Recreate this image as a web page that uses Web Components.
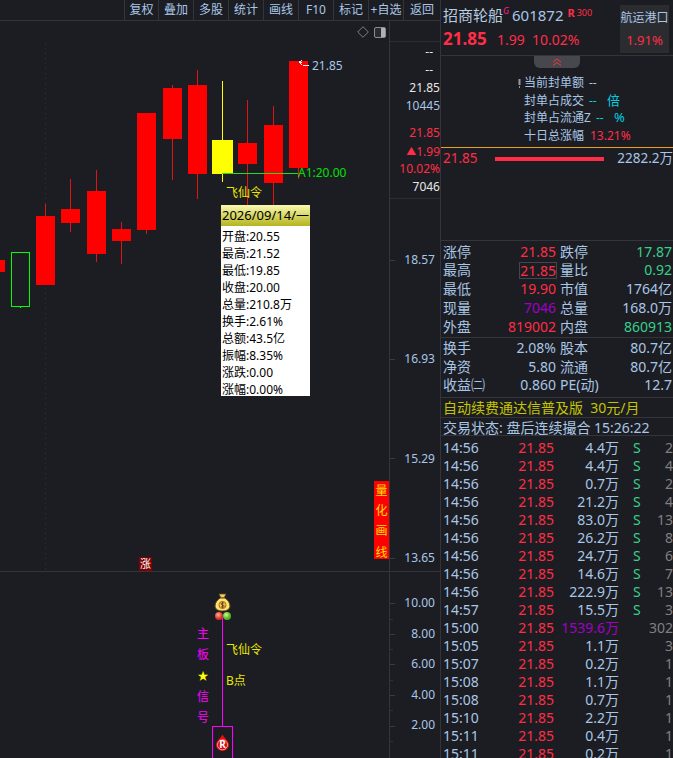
<!DOCTYPE html>
<html lang="zh"><head><meta charset="utf-8"><title>招商轮船</title>
<style>
html,body{margin:0;padding:0;background:#1c1d22;height:758px;overflow:hidden}
body{font:14px/1 "Noto Sans","Noto Sans CJK SC",sans-serif;color:#a9c6e6}
</style></head><body>
<x-app>
  <x-left slot="left">
    <x-toolbar>
      <x-tool style="width:34px">复权</x-tool><x-tool>叠加</x-tool><x-tool>多股</x-tool><x-tool>统计</x-tool><x-tool>画线</x-tool><x-tool>F10</x-tool><x-tool>标记</x-tool><x-tool>+自选</x-tool><x-tool style="width:37px">返回</x-tool>
    </x-toolbar>
    <x-kline-pane></x-kline-pane>
    <x-signal-pane></x-signal-pane>
  </x-left>
  <x-right slot="right">
    <x-quote-head></x-quote-head>
    <x-seal-panel></x-seal-panel>
    <x-stat-block style="--row:18.75px;--pt:1.5px;--pb:1px">
      <x-stat-row a="涨停" b="21.85" bc="r" c="跌停" d="17.87" dc="g"></x-stat-row>
      <x-stat-row a="最高" b="21.85" bc="r" boxed c="量比" d="0.92" dc="g"></x-stat-row>
      <x-stat-row a="最低" b="19.90" bc="r" c="市值" d="1764亿"></x-stat-row>
      <x-stat-row a="现量" b="7046" bc="p" c="总量" d="168.0万"></x-stat-row>
      <x-stat-row a="外盘" b="819002" bc="r" c="内盘" d="860913" dc="g"></x-stat-row>
    </x-stat-block>
    <x-stat-block style="--row:18.5px;--pt:1px;--pb:2px">
      <x-stat-row a="换手" b="2.08%" c="股本" d="80.7亿"></x-stat-row>
      <x-stat-row a="净资" b="5.80" c="流通" d="80.7亿"></x-stat-row>
      <x-stat-row a="收益㈡" b="0.860" c="PE(动)" d="12.7"></x-stat-row>
    </x-stat-block>
    <x-notice-row style="color:#c4c400;height:20px">自动续费通达信普及版&nbsp;&nbsp;30元/月</x-notice-row>
    <x-notice-row style="height:18px">交易状态: 盘后连续撮合 15:26:22</x-notice-row>
    <x-trade-list></x-trade-list>
  </x-right>
</x-app>
<script>
const BG='#1c1d22', RED='#ff2d46', LINE='#34353a';
function def(name, css, html){
  customElements.define(name, class extends HTMLElement{
    constructor(){super();this.attachShadow({mode:'open'}).innerHTML='<style>'+css+'</style>'+(typeof html==='function'?html(this):html);}
  });
}
def('x-app',':host{display:grid;grid-template-columns:440px 233px;width:673px;height:758px;overflow:hidden;background:'+BG+'}',
 '<slot name="left"></slot><slot name="right"></slot>');
def('x-left',':host{display:flex;flex-direction:column;height:758px;overflow:hidden;min-width:0}','<slot></slot>');
def('x-right',':host{display:flex;flex-direction:column;height:758px;overflow:hidden;border-left:1px solid '+LINE+';box-sizing:border-box;width:233px}','<slot></slot>');
def('x-toolbar',':host{display:flex;justify-content:flex-end;height:21px;box-sizing:border-box;border-bottom:1px solid '+LINE+';overflow:hidden;flex:none}','<slot></slot>');
def('x-tool',':host{display:flex;align-items:center;justify-content:center;width:35px;height:20px;box-sizing:border-box;border-left:1px solid '+LINE+';font-size:12px;white-space:nowrap;color:#a9c6e6}','<slot></slot>');

/* K-line */
const candles=[
 [0,5,260,272,null,null,2],
 [36,55,216,285,204,285,45],
 [61,80,209,223,179,232,70],
 [87,106,191,254,170,262,96],
 [112,131,229,241,222,264,121],
 [137,156,113,230,113,234,146],
 [163,182,88,139,85,180,172],
 [188,207,85,174,70,199,197],
 [238,257,143,164,100,205,247],
 [264,283,125,183,106,205,273],
 [289,308,61,168,61,179,298]];
function candleSvg(){
 let s='';
 for(let y=43;y<570;y+=5) s+=`<rect x="45" y="${y-21}" width="1" height="1" fill="#33343a"/>`;
 for(const c of candles){
  if(c[4]!==null) s+=`<rect x="${c[6]}" y="${c[4]-21}" width="1" height="${c[5]-c[4]}" fill="#e01414"/>`;
  s+=`<rect x="${c[0]}" y="${c[2]-21}" width="${c[1]-c[0]}" height="${c[3]-c[2]}" fill="#ff0000"/>`;
 }
 s+=`<rect x="222" y="60" width="1" height="101" fill="#ffff00"/><rect x="212" y="119" width="21" height="34" fill="#ffff00"/>`;
 s+=`<rect x="11.5" y="231.5" width="18" height="54" fill="none" stroke="#00ff00"/><rect x="20" y="286" width="1" height="1" fill="#00ff00"/>`;
 s+=`<rect x="222" y="152" width="76" height="1" fill="#22dd22"/>`;
 s+=`<path d="M299 41.500h3M299 41.500l3-2.500M299 41.500l3 2M303 44.500h6" stroke="#f2f2f2" fill="none"/>`;
 return s;
}
def('x-kline-pane',`
:host{display:flex;flex:none;border-bottom:1px solid ${LINE};box-sizing:border-box;height:551px}
.cv{position:relative;width:389px;flex:none;overflow:hidden}
svg{display:block}
.tag{position:absolute;left:374px;top:460px;width:15px;height:78px;background:#f00;color:#ffe000;font-size:12px;text-align:center;padding-top:1px;box-sizing:border-box}
.tag span{display:block;height:20px;line-height:18px}
.tag span:last-child{margin-top:2px;height:16px}
.ico{position:absolute;right:3px;top:5px;display:flex;gap:5px;align-items:center}
.zhang{position:absolute;left:139px;top:536px;width:13px;height:14px;background:#800000;color:#fff;font-size:11px;line-height:14px;text-align:center}
.sign{position:absolute;left:226px;top:164px;font-size:12px;color:#e8e800;line-height:15px}
x-tooltip{position:absolute;left:221px;top:184px}
.a1{position:absolute;left:298px;top:144px;font-size:12px;color:#00e000;line-height:16px;white-space:nowrap}
.last{position:absolute;left:312px;top:37px;font-size:12px;color:#a9c6e6;line-height:16px}
`,`<div class="cv"><svg width="389" height="550" shape-rendering="crispEdges">${candleSvg()}</svg>
<div class="ico">
<svg width="12" height="12" viewBox="0 0 12 12"><path d="M6 .7 11.300 6 6 11.300.7 6Z" fill="none" stroke="#7c7e84" shape-rendering="auto"/></svg>
<svg width="12" height="11" viewBox="0 0 12 11"><rect x=".5" y=".5" width="11" height="10" rx="1.500" fill="#2a2b30" stroke="#8b8d93"/><rect x="7" y="1" width="4" height="9" fill="#aeb0b5"/></svg>
</div>
<span class="last">21.85</span><span class="a1">A1:20.00</span><span class="sign">飞仙令</span>
<x-tooltip></x-tooltip>
<div class="tag"><span>量</span><span>化</span><span>画</span><span>线</span></div>
<div class="zhang">涨</div>
</div><x-price-axis></x-price-axis>`);

def('x-tooltip',`
:host{display:block;width:89px;height:191px;background:#fff;color:#000;font-size:12px}
.h{height:21px;line-height:21px;background:linear-gradient(#fafab0,#b4b41e);padding-left:1px;white-space:nowrap;font-size:13px}
.b{padding-top:4px}
.r{height:17px;line-height:13px;padding-left:1px;white-space:nowrap}
.r:last-child{height:13px}
`,`<div class="h">2026/09/14/一</div><div class="b">${['开盘:20.55','最高:21.52','最低:19.85','收盘:20.00','总量:210.8万','换手:2.61%','总额:43.5亿','振幅:8.35%','涨跌:0.00','涨幅:0.00%'].map(t=>`<div class="r">${t}</div>`).join('')}</div>`);

def('x-price-axis',`
:host{display:block;width:51px;border-left:1px solid ${LINE};box-sizing:border-box;flex:none;text-align:right;font-size:12px;position:relative}
.top{height:20px;border-bottom:1px solid #2c2d32}
.cell{height:18px;line-height:18px;padding-right:0;color:#a9c6e6}
.q{height:157px;box-sizing:border-box;border-bottom:1px solid #2c2d32;padding-top:1px}
.gap{height:9px}
.w{color:#e6e6e6}.r{color:${RED}}
.dd{padding-right:7px}
.tri{font-size:10px;vertical-align:1px}
.tk{height:99.33px;line-height:99.33px;padding-right:5px;color:#a9c6e6;position:relative}
.tk::before{content:"";position:absolute;left:0;top:50%;width:5px;height:1px;background:#3a3b40}
.ticks{padding-top:11px}
`,`<div class="top"></div><div class="q">
<div class="cell w dd">--</div><div class="cell w dd">--</div><div class="cell w">21.85</div><div class="cell">10445</div><div class="gap"></div>
<div class="cell r">21.85</div><div class="cell r"><span class="tri">▲</span>1.99</div><div class="cell r">10.02%</div><div class="cell w">7046</div></div>
<div class="ticks"><div class="tk">18.57</div><div class="tk">16.93</div><div class="tk">15.29</div><div class="tk">13.65</div></div>`);

/* signal pane */
def('x-signal-pane',`
:host{display:flex;flex:1;min-height:0}
.cv{position:relative;width:389px;flex:none;overflow:hidden}
svg{display:block}
.col{position:absolute;left:195px;top:54px;width:16px;height:100px;color:#ff00ff;font-size:12px;display:flex;flex-direction:column;justify-content:space-between;align-items:center;line-height:16px}
.col i{color:#ffff00;font-style:normal;font-size:11px}
.y{position:absolute;left:226px;font-size:12px;color:#e8e800;line-height:15px}
.box{position:absolute;left:212px;top:154px;width:21px;height:40px;border:1px solid #ff00ff;box-sizing:border-box}
.ln{position:absolute;left:222px;top:45px;width:1px;height:109px;background:#ff00ff}
.ax{width:51px;border-left:1px solid ${LINE};box-sizing:border-box;padding-top:16px;text-align:right}
.t{height:30.6px;line-height:30.6px;padding-right:5px;font-size:12px;position:relative}
.t::before{content:"";position:absolute;left:0;top:50%;width:5px;height:1px;background:#3a3b40}
.t::after{content:"";position:absolute;left:0;top:100%;width:3px;height:1px;background:#303136}
.bag{position:absolute;left:212px;top:21px}
.drop{position:absolute;left:215px;top:162px}
`,`<div class="cv"><div class="ln"></div><div class="box"></div>
<svg class="bag" width="21" height="28" viewBox="0 0 21 28">
<defs><radialGradient id="gr" cx=".4" cy=".35"><stop offset="0" stop-color="#ffb0a0"/><stop offset="1" stop-color="#d83020"/></radialGradient>
<radialGradient id="gg" cx=".4" cy=".35"><stop offset="0" stop-color="#d0ff90"/><stop offset="1" stop-color="#50b020"/></radialGradient></defs>
<path d="M7 1h7l-2 4h-3Z" fill="#f2d060" stroke="#6a4a20" stroke-width=".8"/>
<path d="M8 5h5c3 2 5 5 5 8 0 3-3 5-7.500 5S3 16 3 13c0-3 2-6 5-8Z" fill="#ffe070" stroke="#5a4020"/>
<circle cx="10.500" cy="12" r="3.600" fill="#f6c840" stroke="#8a5a20" stroke-width=".8"/>
<path d="M12.200 10.300c-1-.8-3.200-.7-3.200.5 0 1.600 3.400.8 3.400 2.400 0 1.200-2.400 1.200-3.500.4M10.500 8.800v6.400" fill="none" stroke="#6a3a20" stroke-width=".9"/>
<circle cx="7" cy="23" r="4" fill="url(#gr)"/><circle cx="15" cy="23" r="4" fill="url(#gg)"/></svg>
<svg class="drop" width="15" height="17" viewBox="0 0 15 17"><path d="M7.500 .5C9 4 14 7 14 11a6.500 6 0 0 1-13 0C1 7 6 4 7.500 .5Z" fill="#f00a0a"/><circle cx="7.500" cy="10.800" r="5" fill="#d00810" stroke="#ffc0c0" stroke-width=".8"/><text x="7.500" y="14.300" font-size="10" font-weight="700" fill="#fff" text-anchor="middle" font-family="Noto Sans,sans-serif">R</text></svg>
<div class="col"><span>主</span><span>板</span><i>★</i><span>信</span><span>号</span></div>
<span class="y" style="top:70px">飞仙令</span><span class="y" style="top:101px">B点</span>
</div><div class="ax"><div class="t">10.00</div><div class="t">8.00</div><div class="t">6.00</div><div class="t">4.00</div><div class="t">2.00</div></div>`);

/* right */
def('x-quote-head',`
:host{display:flex;height:56px;box-sizing:border-box;border-bottom:1px solid ${LINE};flex:none;position:relative}
.m{flex:1;padding:5px 0 0 2px;min-width:0}
.l1{display:flex;align-items:flex-start;height:22px;white-space:nowrap}
.nm{font-size:15px;line-height:20px;color:#b9cde2}
.g{color:#ff1a8c;font-size:9px;font-style:italic;line-height:12px;width:9px}
.cd{font-size:15px;line-height:20px}
.rr{color:${RED};font-weight:700;font-size:11px;margin-left:4px;line-height:16px}
.n3{color:${RED};font-size:9px;margin-left:2px;line-height:16px}
.l2{display:flex;align-items:baseline;color:${RED};white-space:nowrap;margin-top:1px}
.p{font-weight:700;font-size:17px;width:54px;line-height:22px}
.d{font-size:14px;width:35px}
.s{flex:none;width:49px;height:48px;margin:5px 4px 0 0;background:#2b2c30;text-align:center;box-sizing:border-box;padding-top:5px;font-size:12px;line-height:16px;white-space:nowrap}
.s b{display:block;font-weight:400;color:${RED};margin-top:6px;font-size:13px}
`,`<div class="m"><div class="l1"><span class="nm">招商轮船</span><span class="g">G</span><span class="cd">601872</span><span class="rr">R</span><span class="n3">300</span></div>
<div class="l2"><span class="p">21.85</span><span class="d">1.99</span><span class="d">10.02%</span></div></div>
<div class="s">航运港口<b>1.91%</b></div>`);

def('x-seal-panel',`
:host{display:block;flex:none;height:185px;box-sizing:border-box;border-bottom:1px solid ${LINE};position:relative}
.tab{position:absolute;left:93px;top:0;width:46px;height:12px;background:#47484d;border-radius:0 0 6px 6px;display:flex;justify-content:center;align-items:center}
.rows{height:92px;box-sizing:border-box;padding:18px 0 0 83px;border-bottom:1px solid #e8a020;position:relative}
.rw{height:17.7px;line-height:17.7px;white-space:nowrap;font-size:12px;display:flex}
.lb{width:60px}
.c{color:#00cfe0}.r{color:${RED}}
.ex{position:absolute;left:77px;top:23px;width:3px;height:9px}
.bar{display:flex;align-items:center;height:19px;padding:1px 0 0 2px;white-space:nowrap}
.bar b{font-weight:400;color:${RED};width:52px;font-size:13.500px}
.bar i{display:block;width:109px;height:4px;background:${RED}}
.bar span{margin-left:auto;font-size:13.500px}
`,`<div class="tab"><svg width="10" height="8" viewBox="0 0 10 8"><path d="M1 4 5 1l4 3M1 7.500 5 4.500l4 3" fill="none" stroke="#ff3040"/></svg></div>
<div class="rows"><svg class="ex" viewBox="0 0 3 9"><rect x=".5" width="2" height="6" fill="#999"/><rect x="1" y="7" width="1" height="2" fill="#999"/></svg>
<div class="rw"><span class="lb">当前封单额</span><span style="margin-left:5px">--</span></div>
<div class="rw"><span class="lb">封单占成交</span><span class="c" style="margin-left:5px;width:18px">--</span><span class="c" style="font-size:13px">倍</span></div>
<div class="rw"><span class="lb" style="width:67px">封单占流通Z</span><span class="c" style="margin-left:5px;width:18px">--</span><span class="c" style="font-size:13px">%</span></div>
<div class="rw"><span class="lb">十日总涨幅</span><span class="r" style="margin-left:6px">13.21%</span></div></div>
<div class="bar"><b>21.85</b><i></i><span>2282.2万</span></div>`);

def('x-stat-block',`:host{display:block;flex:none;border-bottom:1px solid ${LINE};padding:var(--pt) 0 var(--pb);font-size:14px}`,'<slot></slot>');
def('x-stat-row',`
:host{display:grid;grid-template-columns:115px 116px;height:var(--row);line-height:var(--row);white-space:nowrap}
.l,.q{display:flex;justify-content:space-between;padding-left:2px;min-width:0}
.q{padding-left:4px}
.v{text-align:right}
.r{color:${RED}}.g{color:#37d08a}.p{color:#a000c8}
.bx{outline:1px solid #45464b;outline-offset:-1px;padding:0 1px;height:17px;line-height:17px;margin-top:1px;margin-right:-1px}
`,h=>`<div class="l"><span>${h.getAttribute('a')}</span><span class="v ${h.getAttribute('bc')||''} ${h.hasAttribute('boxed')?'bx':''}">${h.getAttribute('b')}</span></div>
<div class="q"><span>${h.getAttribute('c')}</span><span class="v ${h.getAttribute('dc')||''}">${h.getAttribute('d')}</span></div>`);
def('x-notice-row',`:host{display:block;flex:none;box-sizing:border-box;border-bottom:1px solid ${LINE};padding-left:2px;font-size:14px;line-height:19px;white-space:nowrap;overflow:hidden}`,'<slot></slot>');
def('x-trade-row',`
:host{display:grid;grid-template-columns:47px 64px 65px 30px 24px;height:18px;line-height:18px;font-size:14px;white-space:nowrap;padding-left:2px}
.pr{color:${RED};text-align:right}.vol{text-align:right}.s{color:#37d08a;padding-left:14px}.n{color:#7e8084;text-align:right;grid-column:5;justify-self:end}
.p{color:#a000c8}
`,h=>{const[t,v,s,n,p]=h.dataset.r.split('|');return `<span>${t}</span><span class="pr">21.85</span><span class="vol ${p||''}">${v}</span><span class="s">${s}</span><span class="n">${n}</span>`;});
const trades=['14:56|4.4万|S|2','14:56|4.4万|S|4','14:56|0.7万|S|2','14:56|21.2万|S|4','14:56|83.0万|S|13','14:56|26.2万|S|8','14:56|24.7万|S|6','14:56|14.6万|S|7','14:56|222.9万|S|13','14:57|15.5万|S|3','15:00|1539.6万||302|p','15:05|1.1万||3','15:07|0.2万||1','15:08|1.1万||1','15:08|0.7万||1','15:10|2.2万||1','15:11|0.4万||1','15:11|0.2万||1'];
def('x-trade-list',`:host{display:block;flex:1;min-height:0;overflow:hidden;padding-top:3px}`,
 trades.map(r=>`<x-trade-row data-r="${r}"></x-trade-row>`).join(''));
</script>
</body></html>
